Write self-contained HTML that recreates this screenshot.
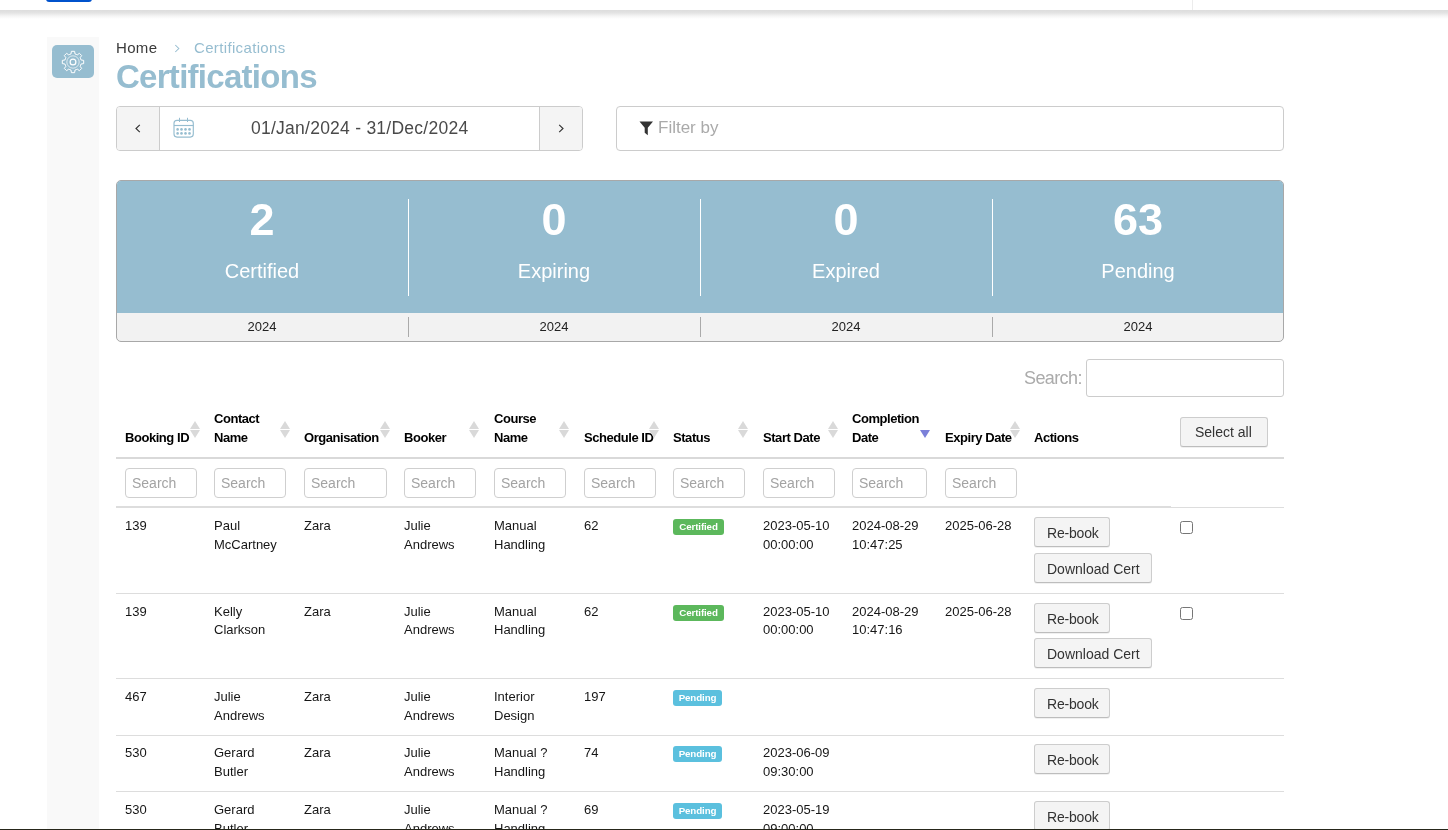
<!DOCTYPE html><html><head><meta charset="utf-8"><style>
*{box-sizing:border-box;margin:0;padding:0}
html,body{width:1448px;height:830px;overflow:hidden;background:#fff;font-family:"Liberation Sans", sans-serif;color:#222}
body{will-change:transform}
.a{position:absolute}
.t{position:absolute;font-size:13px;line-height:19px;white-space:nowrap;color:#161616}
.h{position:absolute;font-size:13px;line-height:19px;white-space:nowrap;font-weight:700;color:#000;letter-spacing:-0.45px}
.inp{position:absolute;height:30px;border:1px solid #cfcfcf;border-radius:4px;background:#fff;font-size:14px;color:#a3a3a3;padding-left:6px;line-height:28px}
.btn{position:absolute;height:30px;border:1px solid #cdcdcd;border-bottom-color:#bdbdbd;border-radius:3px;background:#f4f4f4;font-size:14px;color:#333;line-height:30px;padding-left:12px;white-space:nowrap;box-shadow:0 1px 0 rgba(0,0,0,0.06)}
.lbl{position:absolute;height:16px;border-radius:3px;color:#fff;font-size:9.75px;font-weight:700;line-height:16px;text-align:center;letter-spacing:-0.12px}
.cb{position:absolute;width:13px;height:13px;border:1px solid #767676;border-radius:2.5px;background:#fff}
.sort{position:absolute;width:10px;height:17px}
</style></head><body><div class="a" style="left:0;top:0;width:1448px;height:10px;background:#fff"></div>
<div class="a" style="left:0;top:10px;width:1448px;height:9px;background:linear-gradient(#dddddd,#e3e3e3 30%,#f6f6f6 70%,#ffffff)"></div>
<div class="a" style="left:46px;top:-4px;width:46px;height:6px;background:#0052cc;border-radius:3px"></div>
<div class="a" style="left:1192px;top:0;width:1px;height:10px;background:#ececec"></div>
<div class="a" style="left:47px;top:37px;width:52px;height:792px;background:#f9f9f9"></div>
<div class="a" style="left:52px;top:45px;width:42px;height:33px;background:#96bdd0;border-radius:5px"></div><svg class="a" style="left:61px;top:50px" width="24" height="24" viewBox="0 0 24 24" fill="none" stroke="#fff">
<path stroke-width="1" d="M9.99 3.95 L10.40 1.32 L13.60 1.32 L14.01 3.95 A8.30 8.30 0 0 1 16.27 4.89 L18.42 3.32 L20.68 5.58 L19.11 7.73 A8.30 8.30 0 0 1 20.05 9.99 L22.68 10.40 L22.68 13.60 L20.05 14.01 A8.30 8.30 0 0 1 19.11 16.27 L20.68 18.42 L18.42 20.68 L16.27 19.11 A8.30 8.30 0 0 1 14.01 20.05 L13.60 22.68 L10.40 22.68 L9.99 20.05 A8.30 8.30 0 0 1 7.73 19.11 L5.58 20.68 L3.32 18.42 L4.89 16.27 A8.30 8.30 0 0 1 3.95 14.01 L1.32 13.60 L1.32 10.40 L3.95 9.99 A8.30 8.30 0 0 1 4.89 7.73 L3.32 5.58 L5.58 3.32 L7.73 4.89 A8.30 8.30 0 0 1 9.99 3.95 Z"/>
<circle cx="12" cy="12" r="6.2" stroke-width="0.8" stroke-opacity="0.85"/><circle cx="12" cy="12" r="2.9" stroke-width="1.2"/></svg>
<div class="a" style="left:116px;top:38px;font-size:15px;line-height:20px;color:#3a3a3a;white-space:nowrap;letter-spacing:0.35px">Home</div>
<svg class="a" style="left:173px;top:43px" width="8" height="10" viewBox="0 0 8 10"><path d="M2.3 2 L5.8 5.5 L2.3 9" stroke="#96bdd0" stroke-width="1.05" fill="none"/></svg>
<div class="a" style="left:194px;top:38px;font-size:15px;line-height:20px;color:#96bdd0;white-space:nowrap;letter-spacing:0.35px">Certifications</div>
<div class="a" style="left:116px;top:58px;font-size:33px;line-height:38px;font-weight:700;color:#96bdd0;white-space:nowrap;letter-spacing:-0.72px">Certifications</div>
<div class="a" style="left:116px;top:106px;width:467px;height:45px;border:1px solid #cccccc;border-radius:4px;background:#fff;overflow:hidden"><div class="a" style="left:0;top:0;width:43px;height:43px;background:#f4f4f4;border-right:1px solid #cccccc"></div><div class="a" style="left:422px;top:0;width:44px;height:43px;background:#f4f4f4;border-left:1px solid #cccccc"></div></div>
<svg class="a" style="left:133px;top:123px" width="9" height="11" viewBox="0 0 9 11"><path d="M6.8 1.8 L3 5.5 L6.8 9.2" stroke="#333" stroke-width="1.15" fill="none"/></svg>
<svg class="a" style="left:556px;top:123px" width="9" height="11" viewBox="0 0 9 11"><path d="M3.2 1.8 L7 5.5 L3.2 9.2" stroke="#333" stroke-width="1.15" fill="none"/></svg>
<svg class="a" style="left:172px;top:117px" width="23" height="22" viewBox="0 0 23 22" fill="none" stroke="#96bdd0" stroke-width="1.15">
<rect x="2" y="3.3" width="19.3" height="16.8" rx="3"/><line x1="2" y1="8.5" x2="21.3" y2="8.5"/><line x1="7.5" y1="0.8" x2="7.5" y2="5" stroke-width="1"/><line x1="15.5" y1="0.8" x2="15.5" y2="5" stroke-width="1"/>
<g fill="#96bdd0" stroke="none"><circle cx="5.6" cy="12.4" r="1.3"/><circle cx="9.5" cy="12.4" r="1.3"/><circle cx="13.5" cy="12.4" r="1.3"/><circle cx="17.5" cy="12.4" r="1.3"/>
<circle cx="5.6" cy="16.4" r="1.3"/><circle cx="9.5" cy="16.4" r="1.3"/><circle cx="13.5" cy="16.4" r="1.3"/><circle cx="17.5" cy="16.4" r="1.3"/></g></svg>
<div class="a" style="left:251px;top:117px;font-size:17.5px;line-height:22px;color:#4a4a4a;white-space:nowrap;letter-spacing:0.25px">01/Jan/2024 - 31/Dec/2024</div>
<div class="a" style="left:616px;top:106px;width:668px;height:45px;border:1px solid #cccccc;border-radius:4px;background:#fff"></div>
<svg class="a" style="left:639px;top:121px" width="15" height="15" viewBox="0 0 15 15"><path d="M0.5 0.5 H14 L8.8 6.8 V14.2 L5.7 11.8 V6.8 Z" fill="#333"/></svg>
<div class="a" style="left:658px;top:117px;font-size:17px;line-height:22px;color:#aaaaaa;white-space:nowrap">Filter by</div>
<div class="a" style="left:116px;top:180px;width:1168px;height:162px;border:1px solid #a8a8a8;border-radius:5px;overflow:hidden;background:#f2f2f2"><div class="a" style="left:0;top:0;width:1166px;height:132px;background:#96bdd0"></div></div>
<div class="a" style="left:162px;top:195px;width:200px;text-align:center;font-size:45px;line-height:50px;font-weight:700;color:#fff">2</div>
<div class="a" style="left:162px;top:259px;width:200px;text-align:center;font-size:20px;line-height:24px;color:#fff">Certified</div>
<div class="a" style="left:162px;top:318px;width:200px;text-align:center;font-size:13px;line-height:18px;color:#222">2024</div>
<div class="a" style="left:454px;top:195px;width:200px;text-align:center;font-size:45px;line-height:50px;font-weight:700;color:#fff">0</div>
<div class="a" style="left:454px;top:259px;width:200px;text-align:center;font-size:20px;line-height:24px;color:#fff">Expiring</div>
<div class="a" style="left:454px;top:318px;width:200px;text-align:center;font-size:13px;line-height:18px;color:#222">2024</div>
<div class="a" style="left:408px;top:199px;width:1px;height:97px;background:#fff"></div>
<div class="a" style="left:408px;top:317px;width:1px;height:20px;background:#aaaaaa"></div>
<div class="a" style="left:746px;top:195px;width:200px;text-align:center;font-size:45px;line-height:50px;font-weight:700;color:#fff">0</div>
<div class="a" style="left:746px;top:259px;width:200px;text-align:center;font-size:20px;line-height:24px;color:#fff">Expired</div>
<div class="a" style="left:746px;top:318px;width:200px;text-align:center;font-size:13px;line-height:18px;color:#222">2024</div>
<div class="a" style="left:700px;top:199px;width:1px;height:97px;background:#fff"></div>
<div class="a" style="left:700px;top:317px;width:1px;height:20px;background:#aaaaaa"></div>
<div class="a" style="left:1038px;top:195px;width:200px;text-align:center;font-size:45px;line-height:50px;font-weight:700;color:#fff">63</div>
<div class="a" style="left:1038px;top:259px;width:200px;text-align:center;font-size:20px;line-height:24px;color:#fff">Pending</div>
<div class="a" style="left:1038px;top:318px;width:200px;text-align:center;font-size:13px;line-height:18px;color:#222">2024</div>
<div class="a" style="left:992px;top:199px;width:1px;height:97px;background:#fff"></div>
<div class="a" style="left:992px;top:317px;width:1px;height:20px;background:#aaaaaa"></div>
<div class="a" style="left:1024px;top:367px;font-size:18px;line-height:22px;color:#ababab;white-space:nowrap;letter-spacing:-0.6px">Search:</div>
<div class="a" style="left:1086px;top:359px;width:198px;height:38px;border:1px solid #cccccc;border-radius:3px;background:#fff"></div>
<div class="h" style="left:125px;top:428px">Booking ID</div>
<svg class="sort" style="left:190.0px;top:421px" viewBox="0 0 10 17"><path d="M5 0 L10 8 L0 8 Z" fill="#d9d9d9"/><path d="M0 9 L10 9 L5 17 Z" fill="#d9d9d9"/></svg>
<div class="h" style="left:214px;top:409px">Contact<br>Name</div>
<svg class="sort" style="left:279.5px;top:421px" viewBox="0 0 10 17"><path d="M5 0 L10 8 L0 8 Z" fill="#d9d9d9"/><path d="M0 9 L10 9 L5 17 Z" fill="#d9d9d9"/></svg>
<div class="h" style="left:304px;top:428px">Organisation</div>
<svg class="sort" style="left:379.5px;top:421px" viewBox="0 0 10 17"><path d="M5 0 L10 8 L0 8 Z" fill="#d9d9d9"/><path d="M0 9 L10 9 L5 17 Z" fill="#d9d9d9"/></svg>
<div class="h" style="left:404px;top:428px">Booker</div>
<svg class="sort" style="left:469.0px;top:421px" viewBox="0 0 10 17"><path d="M5 0 L10 8 L0 8 Z" fill="#d9d9d9"/><path d="M0 9 L10 9 L5 17 Z" fill="#d9d9d9"/></svg>
<div class="h" style="left:494px;top:409px">Course<br>Name</div>
<svg class="sort" style="left:559.0px;top:421px" viewBox="0 0 10 17"><path d="M5 0 L10 8 L0 8 Z" fill="#d9d9d9"/><path d="M0 9 L10 9 L5 17 Z" fill="#d9d9d9"/></svg>
<div class="h" style="left:584px;top:428px">Schedule ID</div>
<svg class="sort" style="left:648.5px;top:421px" viewBox="0 0 10 17"><path d="M5 0 L10 8 L0 8 Z" fill="#d9d9d9"/><path d="M0 9 L10 9 L5 17 Z" fill="#d9d9d9"/></svg>
<div class="h" style="left:673px;top:428px">Status</div>
<svg class="sort" style="left:738.0px;top:421px" viewBox="0 0 10 17"><path d="M5 0 L10 8 L0 8 Z" fill="#d9d9d9"/><path d="M0 9 L10 9 L5 17 Z" fill="#d9d9d9"/></svg>
<div class="h" style="left:763px;top:428px">Start Date</div>
<svg class="sort" style="left:828.0px;top:421px" viewBox="0 0 10 17"><path d="M5 0 L10 8 L0 8 Z" fill="#d9d9d9"/><path d="M0 9 L10 9 L5 17 Z" fill="#d9d9d9"/></svg>
<div class="h" style="left:852px;top:409px">Completion<br>Date</div>
<svg class="sort" style="left:920.0px;top:421px" viewBox="0 0 10 17"><path d="M0 9 L10 9 L5 17 Z" fill="#7b80d9"/></svg>
<div class="h" style="left:945px;top:428px">Expiry Date</div>
<svg class="sort" style="left:1009.5px;top:421px" viewBox="0 0 10 17"><path d="M5 0 L10 8 L0 8 Z" fill="#d9d9d9"/><path d="M0 9 L10 9 L5 17 Z" fill="#d9d9d9"/></svg>
<div class="h" style="left:1034px;top:428px">Actions</div>
<div class="btn" style="left:1180px;top:417px;width:88px;padding-left:14px;line-height:28px">Select all</div>
<div class="a" style="left:116px;top:457px;width:1168px;height:2px;background:#d9d9d9"></div>
<div class="inp" style="left:125px;top:468px;width:72px">Search</div>
<div class="inp" style="left:214px;top:468px;width:72px">Search</div>
<div class="inp" style="left:304px;top:468px;width:83px">Search</div>
<div class="inp" style="left:404px;top:468px;width:72px">Search</div>
<div class="inp" style="left:494px;top:468px;width:72px">Search</div>
<div class="inp" style="left:584px;top:468px;width:72px">Search</div>
<div class="inp" style="left:673px;top:468px;width:72px">Search</div>
<div class="inp" style="left:763px;top:468px;width:72px">Search</div>
<div class="inp" style="left:852px;top:468px;width:75px">Search</div>
<div class="inp" style="left:945px;top:468px;width:72px">Search</div>
<div class="a" style="left:116px;top:506px;width:1055px;height:1px;background:#dddddd"></div>
<div class="a" style="left:116px;top:507px;width:1168px;height:1px;background:#dddddd"></div>
<div class="t" style="left:125px;top:516px">139</div>
<div class="t" style="left:214px;top:516px">Paul</div>
<div class="t" style="left:214px;top:535px">McCartney</div>
<div class="t" style="left:304px;top:516px">Zara</div>
<div class="t" style="left:404px;top:516px">Julie</div>
<div class="t" style="left:404px;top:535px">Andrews</div>
<div class="t" style="left:494px;top:516px">Manual</div>
<div class="t" style="left:494px;top:535px">Handling</div>
<div class="t" style="left:584px;top:516px">62</div>
<div class="t" style="left:763px;top:516px">2023-05-10</div>
<div class="t" style="left:763px;top:535px">00:00:00</div>
<div class="t" style="left:852px;top:516px">2024-08-29</div>
<div class="t" style="left:852px;top:535px">10:47:25</div>
<div class="t" style="left:945px;top:516px">2025-06-28</div>
<div class="lbl" style="left:673px;top:519px;width:51px;background:#5cb85c">Certified</div>
<div class="btn" style="left:1034px;top:517px;width:76px;letter-spacing:-0.2px">Re-book</div>
<div class="btn" style="left:1034px;top:553px;width:118px">Download Cert</div>
<div class="cb" style="left:1180px;top:521px"></div>
<div class="a" style="left:116px;top:593px;width:1168px;height:1px;background:#dddddd"></div>
<div class="t" style="left:125px;top:602px">139</div>
<div class="t" style="left:214px;top:602px">Kelly</div>
<div class="t" style="left:214px;top:620px">Clarkson</div>
<div class="t" style="left:304px;top:602px">Zara</div>
<div class="t" style="left:404px;top:602px">Julie</div>
<div class="t" style="left:404px;top:620px">Andrews</div>
<div class="t" style="left:494px;top:602px">Manual</div>
<div class="t" style="left:494px;top:620px">Handling</div>
<div class="t" style="left:584px;top:602px">62</div>
<div class="t" style="left:763px;top:602px">2023-05-10</div>
<div class="t" style="left:763px;top:620px">00:00:00</div>
<div class="t" style="left:852px;top:602px">2024-08-29</div>
<div class="t" style="left:852px;top:620px">10:47:16</div>
<div class="t" style="left:945px;top:602px">2025-06-28</div>
<div class="lbl" style="left:673px;top:605px;width:51px;background:#5cb85c">Certified</div>
<div class="btn" style="left:1034px;top:603px;width:76px;letter-spacing:-0.2px">Re-book</div>
<div class="btn" style="left:1034px;top:638px;width:118px">Download Cert</div>
<div class="cb" style="left:1180px;top:607px"></div>
<div class="a" style="left:116px;top:678px;width:1168px;height:1px;background:#dddddd"></div>
<div class="t" style="left:125px;top:687px">467</div>
<div class="t" style="left:214px;top:687px">Julie</div>
<div class="t" style="left:214px;top:706px">Andrews</div>
<div class="t" style="left:304px;top:687px">Zara</div>
<div class="t" style="left:404px;top:687px">Julie</div>
<div class="t" style="left:404px;top:706px">Andrews</div>
<div class="t" style="left:494px;top:687px">Interior</div>
<div class="t" style="left:494px;top:706px">Design</div>
<div class="t" style="left:584px;top:687px">197</div>
<div class="lbl" style="left:673px;top:690px;width:49px;background:#5bc0de">Pending</div>
<div class="btn" style="left:1034px;top:688px;width:76px;letter-spacing:-0.2px">Re-book</div>
<div class="a" style="left:116px;top:735px;width:1168px;height:1px;background:#dddddd"></div>
<div class="t" style="left:125px;top:743px">530</div>
<div class="t" style="left:214px;top:743px">Gerard</div>
<div class="t" style="left:214px;top:762px">Butler</div>
<div class="t" style="left:304px;top:743px">Zara</div>
<div class="t" style="left:404px;top:743px">Julie</div>
<div class="t" style="left:404px;top:762px">Andrews</div>
<div class="t" style="left:494px;top:743px">Manual ?</div>
<div class="t" style="left:494px;top:762px">Handling</div>
<div class="t" style="left:584px;top:743px">74</div>
<div class="t" style="left:763px;top:743px">2023-06-09</div>
<div class="t" style="left:763px;top:762px">09:30:00</div>
<div class="lbl" style="left:673px;top:746px;width:49px;background:#5bc0de">Pending</div>
<div class="btn" style="left:1034px;top:744px;width:76px;letter-spacing:-0.2px">Re-book</div>
<div class="a" style="left:116px;top:791px;width:1168px;height:1px;background:#dddddd"></div>
<div class="t" style="left:125px;top:800px">530</div>
<div class="t" style="left:214px;top:800px">Gerard</div>
<div class="t" style="left:214px;top:819px">Butler</div>
<div class="t" style="left:304px;top:800px">Zara</div>
<div class="t" style="left:404px;top:800px">Julie</div>
<div class="t" style="left:404px;top:819px">Andrews</div>
<div class="t" style="left:494px;top:800px">Manual ?</div>
<div class="t" style="left:494px;top:819px">Handling</div>
<div class="t" style="left:584px;top:800px">69</div>
<div class="t" style="left:763px;top:800px">2023-05-19</div>
<div class="t" style="left:763px;top:819px">09:00:00</div>
<div class="lbl" style="left:673px;top:803px;width:49px;background:#5bc0de">Pending</div>
<div class="btn" style="left:1034px;top:801px;width:76px;letter-spacing:-0.2px">Re-book</div>
<div class="a" style="left:0;top:829px;width:1448px;height:1px;background:#26261a"></div></body></html>
